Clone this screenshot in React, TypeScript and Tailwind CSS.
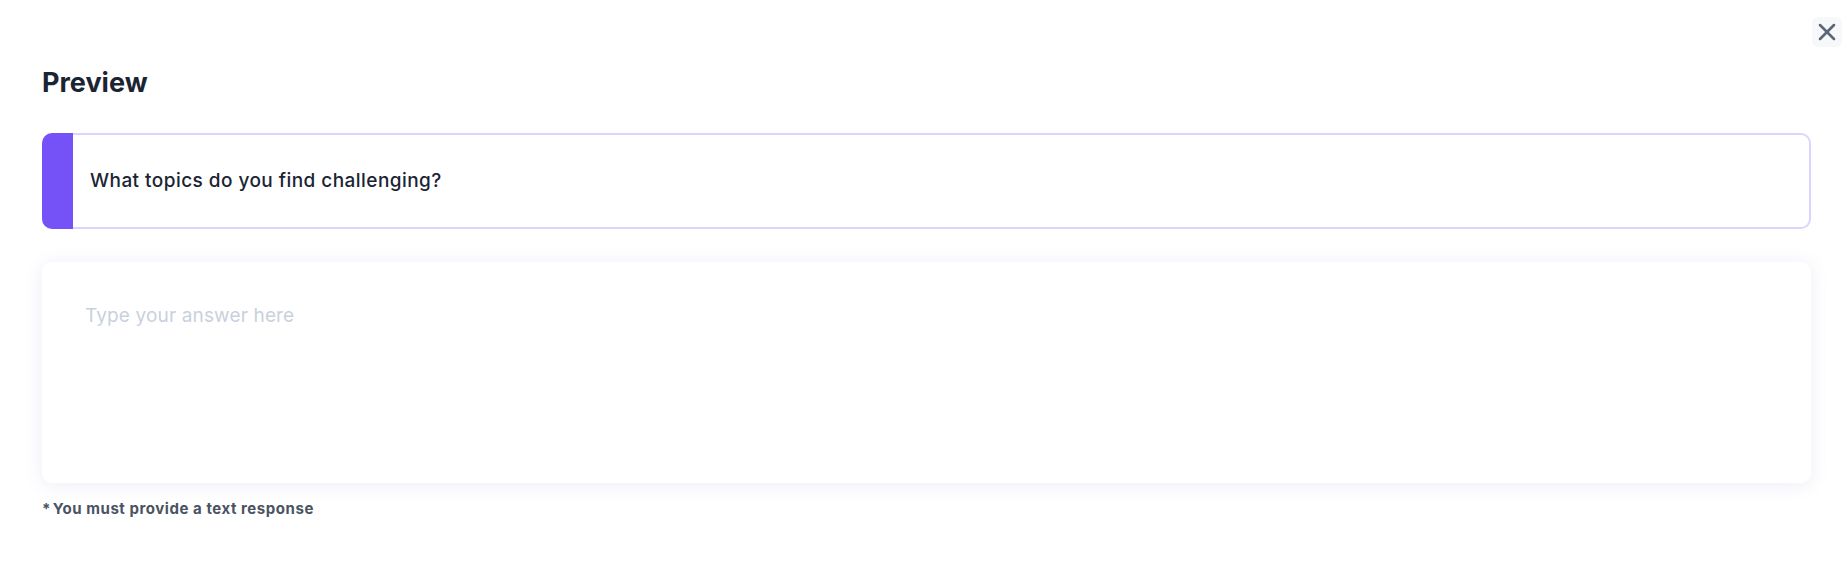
import { X } from 'lucide-react';

export default function App() {
  return (
    <div className="min-h-screen bg-white font-['Inter',sans-serif] text-[#1b2433]">
      {/* Header */}
      <div className="flex justify-end pt-[17px] pr-[3px]">
        <button className="w-[30px] h-[30px] rounded-md bg-[#f7f8fa] flex items-center justify-center text-[#5b6676]">
          <X className="w-[28px] h-[28px]" strokeWidth={2.2} />
        </button>
      </div>

      <div className="pl-[42px] pr-[34px]">
        <h2 className="mt-[20px] text-[27px] leading-[32px] font-bold">Preview</h2>

        {/* Question */}
        <div className="mt-[34px] flex h-[96px]">
          <div className="w-[31px] bg-[#7551f8] rounded-l-[10px]" />
          <div className="flex-1 flex items-center pl-[17px] border-2 border-l-0 border-[#dcd4ff] rounded-r-[10px]">
            <p className="text-[19px] tracking-[0.45px] font-medium">What topics do you find challenging?</p>
          </div>
        </div>

        {/* Answer */}
        <textarea
          className="mt-[33px] block w-full h-[221px] resize-none rounded-[10px] bg-white px-[43px] pt-[40px] text-[19px] tracking-[0.15px] leading-[28px] outline-none shadow-[0_2px_18px_rgba(110,118,200,0.13)] placeholder:text-[#c9d1dd]"
          placeholder="Type your answer here"
        />

        <p className="mt-[16px] text-[15px] tracking-[0.55px] leading-[20px] font-bold text-[#4a5363]">*&#8202;You must provide a text response</p>
      </div>
    </div>
  );
}
